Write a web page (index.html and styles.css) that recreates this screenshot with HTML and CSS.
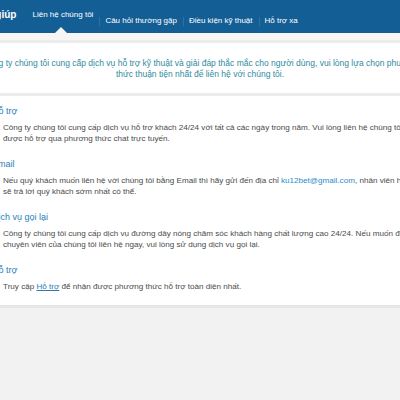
FILE: index.html
```html
<!DOCTYPE html>
<html lang="vi">
<head>
    <meta charset="UTF-8">
    <meta name="viewport" content="width=device-width, initial-scale=1.0">
    <title>Trợ giúp - Liên hệ chúng tôi</title>
    <link rel="stylesheet" href="styles.css">
</head>
<body>
    <div class="header">
        <div class="header-inner">
            <div class="title">Trợ giúp</div>
            <ul class="nav">
                <li class="active">Liên hệ chúng tôi</li>
                <li>Câu hỏi thường gặp</li>
                <li>Điều kiện kỹ thuật</li>
                <li>Hỗ trợ xa</li>
            </ul>
        </div>
    </div>
    <div class="band"></div>

    <div class="intro">
        <p class="intro-text">Công ty chúng tôi cung cấp dịch vụ hỗ trợ kỹ thuật và giải đáp thắc mắc cho người dùng, vui lòng lựa chọn phương<br>thức thuận tiện nhất để liên hệ với chúng tôi.</p>
    </div>

    <div class="main">
        <div class="content">
            <div class="section">
                <h2>Hỗ trợ</h2>
                <p>Công ty chúng tôi cung cấp dịch vụ hỗ trợ khách 24/24 với tất cả các ngày trong năm. Vui lòng liên hệ chúng tôi để<br>được hỗ trợ qua phương thức chat trực tuyến.</p>
            </div>
            <div class="section">
                <h2>Email</h2>
                <p>Nếu quý khách muốn liên hệ với chúng tôi bằng Email thì hãy gửi đến địa chỉ <a class="mail" href="#">ku12bet@gmail.com</a>, nhân viên hỗ trợ<br>sẽ trả lời quý khách sớm nhất có thể.</p>
            </div>
            <div class="section">
                <h2>Dịch vụ gọi lại</h2>
                <p>Công ty chúng tôi cung cấp dịch vụ đường dây nóng chăm sóc khách hàng chất lượng cao 24/24. Nếu muốn được hỗ trợ bởi<br>chuyên viên của chúng tôi liên hệ ngay, vui lòng sử dụng dịch vụ gọi lại.</p>
            </div>
            <div class="section">
                <h2>Hỗ trợ</h2>
                <p>Truy cập <a class="link" href="#">Hỗ trợ</a> để nhận được phương thức hỗ trợ toàn diện nhất.</p>
            </div>
        </div>
    </div>
</body>
</html>
```

FILE: styles.css
```css
body {
    margin: 0;
    font-family: "Liberation Sans", Arial, sans-serif;
    background: #f2f2f2;
    overflow: hidden;
}
.header {
    background: #145e96;
    height: 33px;
}
.header-inner {
    display: flex;
    height: 100%;
    margin-left: -24px;
}
.title {
    color: white;
    font-weight: bold;
    font-size: 10px;
    line-height: 12px;
    padding-top: 9px;
    white-space: nowrap;
}
.nav {
    display: flex;
    list-style: none;
    margin: 0 0 0 10px;
    padding: 0;
}
.nav li {
    position: relative;
    color: white;
    font-size: 8px;
    line-height: 12px;
    padding: 15px 6px 0;
    white-space: nowrap;
}
.nav li + li::before {
    content: "";
    position: absolute;
    left: 0;
    top: 17px;
    height: 9px;
    border-left: 1px solid rgba(255,255,255,0.12);
}
.nav li.active {
    padding-top: 9px;
}
.nav li.active::after {
    content: "";
    position: absolute;
    bottom: 0;
    left: 50%;
    margin-left: -8px;
    border-left: 6px solid transparent;
    border-right: 6px solid transparent;
    border-bottom: 6px solid #f8f6f4;
}
.band {
    height: 7px;
    background: #f8f6f4;
}
.intro {
    background: white;
    border-top: 3px solid #ececec;
    border-bottom: 3px solid #ececec;
    height: 50px;
}
.intro-text {
    width: 1000px;
    margin: 0 0 0 calc(50% - 500px);
    padding-top: 15px;
    text-align: center;
    color: #2f8b9f;
    font-size: 8.5px;
    line-height: 10.5px;
    white-space: nowrap;
}
.main {
    background: white;
    padding: 9px 0 12px;
    border-bottom: 3px solid #e6e6e6;
    box-shadow: 0 5px 0 #ededed;
}
.content {
    margin-left: -8px;
}
.section {
    margin-bottom: 14px;
}
.section:last-child {
    margin-bottom: 0;
}
h2 {
    margin: 0 0 6px;
    font-size: 9px;
    line-height: 12px;
    font-weight: normal;
    color: #2a80b9;
    white-space: nowrap;
}
.section p {
    margin: 0;
    padding-left: 11px;
    font-size: 8.1px;
    line-height: 10.5px;
    color: #4a4a4a;
    white-space: nowrap;
}
.mail {
    color: #2b8ccd;
    text-decoration: none;
}
.link {
    color: #2a7ab8;
    text-decoration: underline;
}
```
